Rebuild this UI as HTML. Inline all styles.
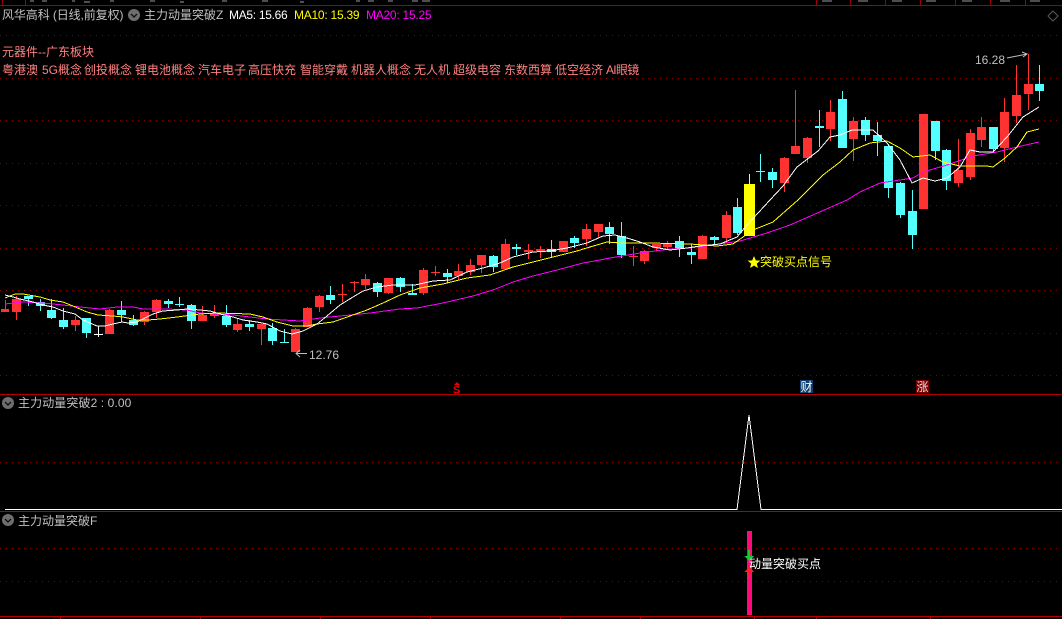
<!DOCTYPE html>
<html lang="zh">
<head>
<meta charset="utf-8">
<title>风华高科</title>
<style>
html,body{margin:0;padding:0;background:#000;}
#p{position:relative;width:1062px;height:619px;overflow:hidden;background:#000;font:12px/14px "Liberation Sans","WenQuanYi Zen Hei","Noto Sans CJK SC",sans-serif;}
#p svg{position:absolute;left:0;top:0;}
.t{position:absolute;white-space:nowrap;line-height:14px;font-size:12px;}
.g{color:#c0c0c0;}
.r{color:#ff8080;}
</style>
</head>
<body>
<div id="p">
<svg width="1062" height="619" viewBox="0 0 1062 619">
<g shape-rendering="crispEdges" fill="none">
<!-- top strip remnants -->
<path d="M0 5.5H1062" stroke="#a00000"/>
<path d="M2.5 0V5M25.5 0V5M816.5 0V5M850.5 0V5M885.5 0V5M920.5 0V5M955.5 0V5M990.5 0V5M1025.5 0V5" stroke="#a00000"/>
<path d="M30 1h4M42 1h5M72 1h3M84 2h6M110 1h4M150 1h5M180 2h4M222 1h5M262 1h6M300 2h4M356 1h4M368 1h6M388 1h5M412 1h6M422 1h8M822 1h10M858 1h10M892 1h10M926 1h10M962 1h10M1000 1h10M1030 1h10" stroke="#9a9a9a"/>
<!-- grid -->
<g stroke="#8c0000" stroke-dasharray="1 5">
<path d="M0 35.5H1062M0 78.5H1062M0 120.5H1062M0 163.5H1062M0 205.5H1062M0 248.5H1062M0 290.5H1062M0 333.5H1062M0 375.5H1062"/>
<path d="M0 462.5H1062M0 548.5H1062M0 581.5H1062"/>
</g>
<!-- panel separators -->
<path d="M0 394.5H1062M0 511.5H1062M0 616.5H1062" stroke="#b00000"/>
<path d="M754.5 617V619M816.5 617V619M60.5 617V619M200.5 617V619M320.5 617V619M430.5 617V619M560.5 617V619M640.5 617V619M930.5 617V619" stroke="#b00000"/>
<!-- red wicks -->
<path stroke="#ff3232" d="M5.5 300V312M16.5 296V320M75.5 316V331M109.5 309V334M144.5 311V325M156.5 299V318M202.5 306V321M214.5 305V318M237.5 318V332M261.5 324V345M295.5 328V352M307.5 307V327M319.5 295V312M342.5 284V302M354.5 281V292M365.5 274V289M388.5 278V294M423.5 268V295M435.5 266V276M458.5 264V280M470.5 259V275M481.5 255V273M505.5 239V269M528.5 244V259M540.5 246V258M563.5 241V252M586.5 224V246M598.5 224V238M633.5 246V266M644.5 250V264M656.5 244V251M667.5 241V249M702.5 235V259M726.5 211V243M784.5 157V192M795.5 90V154M807.5 137V163M830.5 100V141M853.5 117V161M958.5 139V187M970.5 129V180M981.5 117V147M1004.5 98V162M1016.5 65V123M1028.5 54V110"/>
<!-- cyan wicks -->
<path stroke="#54ffff" d="M28.5 296V306M40.5 299V311M51.5 299V319M63.5 308V329M86.5 318V338M121.5 301V322M133.5 315V326M168.5 299V308M179.5 297V307M191.5 304V329M226.5 305V327M249.5 320V331M272.5 323V345M284.5 329V343M330.5 286V304M377.5 282V297M400.5 277V292M412.5 284V295M447.5 269V283M493.5 255V272M516.5 244V255M551.5 240V258M574.5 236V248M609.5 222V244M621.5 222V258M679.5 236V257M691.5 244V264M714.5 236V244M737.5 198V235M760.5 154V182M772.5 168V188M819.5 110V147M842.5 91V148M865.5 117V141M877.5 122V156M888.5 144V198M900.5 182V218M912.5 190V249M935.5 121V160M946.5 149V190M993.5 127V152M1039.5 65V101"/>
<!-- red bodies -->
<path fill="#ff3232" d="M1 309h8v3h-8zM12 299h9v13h-9zM71 320h9v5h-9zM105 310h9v24h-9zM140 312h9v10h-9zM152 300h9v12h-9zM198 315h9v6h-9zM210 313h9v3h-9zM233 324h9v6h-9zM257 324h9v5h-9zM291 329h9v23h-9zM303 308h9v19h-9zM315 296h9v11h-9zM338 294h9v1h-9zM350 282h9v1h-9zM361 279h9v6h-9zM384 278h9v15h-9zM419 270h9v23h-9zM431 272h9v1h-9zM454 271h9v5h-9zM466 265h9v7h-9zM477 255h9v10h-9zM501 244h9v25h-9zM524 250h9v2h-9zM536 249h9v2h-9zM559 241h9v11h-9zM582 229h9v10h-9zM594 224h9v8h-9zM629 256h9v1h-9zM640 251h9v10h-9zM652 244h9v4h-9zM663 243h9v4h-9zM698 236h9v23h-9zM722 215h9v23h-9zM780 158h9v25h-9zM791 146h9v8h-9zM803 138h9v20h-9zM826 112h9v17h-9zM849 121h9v18h-9zM919 114h9v95h-9zM954 170h9v13h-9zM966 133h9v44h-9zM977 127h9v13h-9zM1000 112h9v36h-9zM1012 95h9v21h-9zM1024 84h9v10h-9z"/>
<!-- cyan bodies -->
<path fill="#54ffff" d="M24 296h9v3h-9zM36 302h9v4h-9zM47 310h9v8h-9zM59 320h9v7h-9zM82 318h9v15h-9zM117 310h9v5h-9zM129 320h9v5h-9zM164 301h9v3h-9zM175 304h9v1h-9zM187 305h9v16h-9zM222 316h9v9h-9zM245 324h9v3h-9zM268 328h9v13h-9zM280 342h9v1h-9zM326 295h9v5h-9zM373 283h9v9h-9zM396 278h9v9h-9zM408 293h9v2h-9zM443 273h9v4h-9zM489 256h9v11h-9zM512 247h9v2h-9zM547 249h9v3h-9zM570 238h9v5h-9zM605 227h9v7h-9zM617 236h9v19h-9zM675 241h9v7h-9zM687 252h9v3h-9zM710 237h9v3h-9zM733 207h9v26h-9zM756 171h9v1h-9zM768 172h9v8h-9zM815 126h9v2h-9zM838 99h9v49h-9zM861 120h9v15h-9zM873 135h9v6h-9zM884 146h9v42h-9zM896 183h9v32h-9zM908 211h9v24h-9zM931 121h9v30h-9zM942 150h9v31h-9zM989 127h9v22h-9zM1035 84h9v7h-9z"/>
<!-- white doji and yellow signal candle -->
<path stroke="#fff" d="M94 334.5h9M98.5 326V337"/>
<path stroke="#ffff00" d="M749.5 174V184"/>
<rect x="744" y="184" width="11" height="52" fill="#ffff00"/>
<!-- MA20 -->
<polyline stroke="#ff00ff" points="5,304 23,302 43,303 63,305 80,307 100,309 117,307 133,307 143,309 167,309 187,310 200,313 233,315 267,319 300,321 320,318 350,315 370,313 400,309 417,308 443,303 473,296 493,290 513,282 533,276 557,270 583,263 600,260 610,258 640,253 670,249 690,248 713,245 740,241 767,233 790,225 847,200 860,192 880,183 913,178 923,172 947,165 973,156 997,152 1017,147 1039,142"/>
<!-- MA10 -->
<polyline stroke="#ffff00" points="5,298 15,294 23,294 40,297 50,300 63,302 73,306 87,312 98,315 113,316 123,317 137,320 148,320 160,319 177,317 200,314 217,313 250,314 263,317 277,322 293,326 307,326 317,324 333,322 350,316 367,310 383,303 400,295 420,288 443,284 467,278 490,275 513,267 533,262 553,257 577,251 590,247 607,242 620,243 650,243 690,244 717,246 733,244 753,230 773,222 790,207 798,200 823,175 840,162 853,150 870,143 887,141 900,148 913,157 930,155 943,162 960,166 987,166 993,167 1005,158 1017,147 1027,132 1039,129"/>
<!-- MA5 -->
<polyline stroke="#ffffff" points="5,295 13,297 20,299 33,302 43,305 53,307 63,311 75,314 83,320 97,326 105,326 113,324 122,322 128,323 137,322 143,319 153,314 163,311 177,310 187,309 200,310 210,311 220,314 233,317 243,320 257,322 267,324 280,331 292,334 303,331 317,324 327,316 340,305 353,297 363,291 377,287 393,285 415,285 433,281 450,280 467,272 483,268 500,263 513,257 533,252 550,251 567,248 587,243 603,236 615,235 627,238 640,242 653,247 670,250 687,248 700,246 720,244 737,237 747,225 770,200 783,186 797,167 818,151 830,137 840,135 852,130 873,130 887,143 900,160 912,183 923,178 935,181 947,178 960,167 970,150 980,152 993,152 1007,137 1023,117 1039,107"/>
<!-- lower panel line -->
<polyline stroke="#ffffff" points="5,509.5 737,509.5 749,415 761,509.5 1062,509.5"/>
<!-- pink bar -->
<rect x="747" y="531" width="5" height="84" fill="#ff0a78"/>
</g>
<!-- arrows on bar -->
<path d="M748 550h2v6h4l-5 5-5-5h4z" fill="#10d030" shape-rendering="crispEdges"/>
<path d="M749 567l5 5h-4v6h-2v-6h-4z" fill="#ff2020" shape-rendering="crispEdges"/>
<!-- header circles -->
<g fill="#6e6e6e">
<circle cx="134" cy="15" r="6"/>
<circle cx="8" cy="403" r="6"/>
<circle cx="8" cy="520" r="6"/>
</g>
<g fill="none" stroke="#111" stroke-width="1.4">
<path d="M131 14l3 3 3-3"/>
<path d="M5 402l3 3 3-3"/>
<path d="M5 519l3 3 3-3"/>
</g>
<!-- diamond -->
<path d="M1053 11l5 5-5 5-5-5z" fill="none" stroke="#5c5c5c"/>
<!-- high/low arrows -->
<path d="M1007 58l20-4M1022 52l5 2-4 3" fill="none" stroke="#c0c0c0"/>
<path d="M307 353.5H296M300 350l-4 3.5 4 3.5" fill="none" stroke="#c0c0c0"/>
<!-- star -->
<polygon points="754,256 755.8,260.4 760.4,260.6 756.8,263.6 758,268 754,265.6 750,268 751.2,263.6 747.6,260.6 752.2,260.4" fill="#ffff00"/>
<!-- markers -->
<rect x="800" y="380" width="13" height="13" fill="#0f3f70"/>
<rect x="916" y="380" width="13" height="13" fill="#7a0000"/>
<path d="M457 382l3 3h-6z" fill="#f00000"/>
<text x="453" y="393.5" font-family="Liberation Sans" font-size="11" font-weight="bold" fill="#f00000">S</text>
</svg>

<div class="t g" style="left:2px;top:8px;letter-spacing:-.1px;">风华高科 (日线,前复权)</div>
<div class="t g" style="left:144px;top:8px;">主力动量突破Z</div>
<div class="t" style="left:229px;top:8px;color:#fff;letter-spacing:-.3px;">MA5: 15.66</div>
<div class="t" style="left:294px;top:8px;color:#ffff00;letter-spacing:-.25px;">MA10: 15.39</div>
<div class="t" style="left:366px;top:8px;color:#ff00ff;letter-spacing:-.25px;">MA20: 15.25</div>

<div class="t r" style="left:2px;top:45px;">元器件--广东板块</div>
<div class="t r" style="left:2px;top:63px;">粤港澳</div>
<div class="t r" style="left:42px;top:63px;">5G概念</div>
<div class="t r" style="left:84px;top:63px;">创投概念</div>
<div class="t r" style="left:135px;top:63px;">锂电池概念</div>
<div class="t r" style="left:198px;top:63px;">汽车电子</div>
<div class="t r" style="left:248px;top:63px;">高压快充</div>
<div class="t r" style="left:300px;top:63px;">智能穿戴</div>
<div class="t r" style="left:351px;top:63px;">机器人概念</div>
<div class="t r" style="left:414px;top:63px;">无人机</div>
<div class="t r" style="left:453px;top:63px;">超级电容</div>
<div class="t r" style="left:504px;top:63px;">东数西算</div>
<div class="t r" style="left:555px;top:63px;">低空经济</div>
<div class="t r" style="left:606px;top:63px;letter-spacing:-.7px;">AI眼镜</div>

<div class="t g" style="left:975px;top:53px;">16.28</div>
<div class="t g" style="left:309px;top:348px;">12.76</div>
<div class="t" style="left:760px;top:255px;color:#ffff00;">突破买点信号</div>

<div class="t" style="left:800px;top:380px;width:13px;text-align:center;color:#fff;">财</div>
<div class="t" style="left:916px;top:380px;width:13px;text-align:center;color:#f0d8d8;">涨</div>

<div class="t g" style="left:18px;top:396px;letter-spacing:.1px;">主力动量突破2 : 0.00</div>
<div class="t g" style="left:18px;top:514px;">主力动量突破F</div>
<div class="t" style="left:749px;top:557px;color:#fff;">动量突破买点</div>
</div>
</body>
</html>
